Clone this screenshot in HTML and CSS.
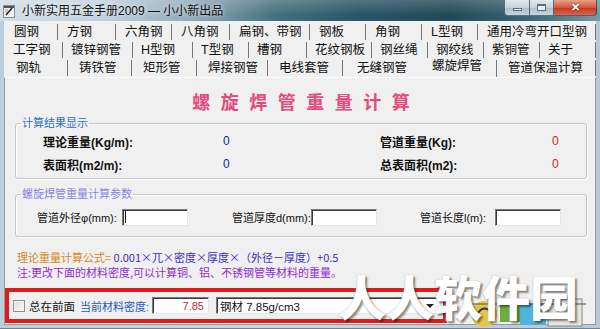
FILE: index.html
```html
<!DOCTYPE html>
<html lang="zh-CN">
<head>
    <meta charset="UTF-8">
    <meta name="viewport" content="width=device-width, initial-scale=1.0">
    <title>小新实用五金手册2009 — 小小新出品</title>
    <link rel="stylesheet" href="styles.css">
</head>
<body>
<div class="window">
    <div class="titlebar">
        <svg class="app-icon" width="13" height="14" viewBox="0 0 13 14">
            <rect x="0.5" y="1.5" width="11" height="12" fill="#f4f4f4" stroke="#8a8a8a"/>
            <rect x="1" y="2" width="10" height="2" fill="#555"/>
            <path d="M3 11 L9 4" stroke="#222" stroke-width="1.6"/>
            <path d="M2 6 h3 M2 8 h2" stroke="#999"/>
        </svg>
        <span class="title">小新实用五金手册2009 — 小小新出品</span>
        <div class="controls">
            <span class="ctl min"><i></i></span>
            <span class="ctl max"><i></i></span>
            <span class="ctl close">✕</span>
        </div>
    </div>

    <div class="client">
        <div class="tabs">
            <div class="tab-row row1">
                <span class="tab">圆钢</span>
                <span class="tab">方钢</span>
                <span class="tab">六角钢</span>
                <span class="tab">八角钢</span>
                <span class="tab">扁钢、带钢</span>
                <span class="tab">钢板</span>
                <span class="tab">角钢</span>
                <span class="tab">L型钢</span>
                <span class="tab">通用冷弯开口型钢</span>
            </div>
            <div class="tab-row row2">
                <span class="tab">工字钢</span>
                <span class="tab">镀锌钢管</span>
                <span class="tab">H型钢</span>
                <span class="tab">T型钢</span>
                <span class="tab">槽钢</span>
                <span class="tab">花纹钢板</span>
                <span class="tab">钢丝绳</span>
                <span class="tab">钢绞线</span>
                <span class="tab">紫铜管</span>
                <span class="tab">关于</span>
            </div>
            <div class="tab-row row3">
                <span class="tab">钢轨</span>
                <span class="tab">铸铁管</span>
                <span class="tab">矩形管</span>
                <span class="tab">焊接钢管</span>
                <span class="tab">电线套管</span>
                <span class="tab no-sep">无缝钢管</span>
                <span class="tab active">螺旋焊管</span>
                <span class="tab">管道保温计算</span>
            </div>
        </div>

        <div class="panel">
            <h1 class="heading">螺旋焊管重量计算</h1>

            <fieldset class="group result-group">
                <legend class="legend-blue">计算结果显示</legend>
                <div class="result-grid">
                    <span class="label-bold">理论重量(Kg/m):</span>
                    <span class="val blue">0</span>
                    <span class="label-bold">管道重量(Kg):</span>
                    <span class="val red">0</span>
                    <span class="label-bold">表面积(m2/m):</span>
                    <span class="val blue">0</span>
                    <span class="label-bold">总表面积(m2):</span>
                    <span class="val red">0</span>
                </div>
            </fieldset>

            <fieldset class="group param-group">
                <legend class="legend-purple">螺旋焊管重量计算参数</legend>
                <div class="param-grid">
                    <span class="label">管道外径φ(mm):</span>
                    <span class="box"><span class="caret"></span></span>
                    <span class="label">管道厚度d(mm):</span>
                    <span class="box"></span>
                    <span class="label">管道长度l(m):</span>
                    <span class="box"></span>
                </div>
            </fieldset>

            <div class="notes">
                <p><span class="orange">理论重量计算公式=</span> <span class="navy">0.001×兀×密度×厚度×（外径－厚度）+0.5</span></p>
                <p class="purple">注:更改下面的材料密度,可以计算铜、铝、不锈钢管等材料的重量。</p>
            </div>

            <div class="bottom-bar">
                <span class="checkbox"></span>
                <span class="check-label">总在前面</span>
                <span class="density-label">当前材料密度:</span>
                <span class="box density">7.85</span>
                <span class="box combo">钢材 7.85g/cm3<span class="arrow"></span></span>
            </div>
        </div>
    </div>

    <div class="watermark">
        <svg class="wm-logo" width="120" height="34" viewBox="0 0 120 34">
            <circle cx="18" cy="20" r="13" fill="#e4c64a"/>
            <path d="M10 22 q8 -14 16 -2" stroke="#333" stroke-width="2" fill="none"/>
            <rect x="34" y="4" width="22" height="24" fill="#6cae3a"/>
            <rect x="54" y="9" width="26" height="22" fill="#4fb3dd"/>
            <rect x="82" y="5" width="34" height="27" fill="#e9e6df" stroke="#888"/>
            <path d="M0 10 H120" stroke="#555" stroke-width="1"/>
        </svg>
        <span class="wm-text">人人软件园</span>
    </div>
</div>
</body>
</html>
```

FILE: styles.css
```css
* {
    box-sizing: border-box;
}
body {
    margin: 0;
    width: 600px;
    height: 329px;
    overflow: hidden;
    font-family: "Liberation Sans", "Noto Sans CJK SC", sans-serif;
    font-size: 12px;
    color: #111;
    background: #c5d4df;
}
.window {
    position: relative;
    width: 600px;
    height: 329px;
    display: flex;
    flex-direction: column;
    background: linear-gradient(90deg, #bccddb, #c9d7e2 50%, #b7c9d6);
    border-bottom: 1px solid #6d8597;
}

/* title bar */
.titlebar {
    height: 21px;
    display: flex;
    align-items: center;
    padding-left: 3px;
    background:
        linear-gradient(180deg, rgba(255,255,255,0.18), rgba(255,255,255,0) 70%),
        linear-gradient(90deg, #d3dfe8 0%, #c0cfdb 18%, #8aa6b5 33%, #46707f 46%, #2b5566 60%, #224958 75%, #3a6676 88%, #7299a7 100%);
}
.app-icon {
    flex: none;
}
.title {
    margin-left: 6px;
    font-size: 12px;
    line-height: 14px;
    color: #111;
    text-shadow: 0 0 5px rgba(255,255,255,0.9);
}
.controls {
    margin-left: auto;
    margin-right: 3px;
    align-self: flex-start;
    display: flex;
}
.ctl {
    height: 16px;
    display: flex;
    align-items: center;
    justify-content: center;
    border: 1px solid rgba(40,60,80,0.7);
    border-top: none;
}
.min, .max {
    width: 25px;
    background: linear-gradient(180deg, #e4eaef, #c6d1da 50%, #aebcc8 51%, #c9d4dc);
}
.min {
    border-bottom-left-radius: 4px;
    border-right: none;
}
.min i {
    width: 9px;
    height: 3px;
    margin-top: 4px;
    background: #fff;
    border: 1px solid #5d6f7d;
}
.max i {
    width: 9px;
    height: 7px;
    border: 1px solid #5d6f7d;
    border-top-width: 2px;
    background: #e9eef2;
}
.close {
    width: 43px;
    border-bottom-right-radius: 4px;
    border-left: none;
    color: #fff;
    font-size: 11px;
    font-weight: bold;
    background: linear-gradient(180deg, #e8a08c, #d4573d 50%, #c2371c 51%, #d9654a);
    text-shadow: 0 0 2px #5a1a0a;
}

/* client area */
.client {
    flex: 1;
    margin: 0 4px 3px;
    background: #f0f0f0;
    display: flex;
    flex-direction: column;
}
.tabs {
    padding: 2px 0 0 1px;
}
.tab-row {
    display: grid;
    height: 18px;
    align-items: center;
}
.row1 {
    grid-template-columns: 53px 58px 56px 58px 80px 56px 56px 56px 1fr;
}
.row2 {
    grid-template-columns: 58px 70px 60px 56px 58px 65px 56px 56px 56px 1fr;
}
.row3 {
    grid-template-columns: 63px 64px 65px 71px 75px 70px 84px 1fr;
}
.tab {
    height: 16px;
    line-height: 16px;
    font-size: 12.5px;
    white-space: nowrap;
    padding-left: 9px;
    border-right: 1px solid #767676;
    color: #111;
}
.row2 .tab {
    padding-left: 8px;
}
.row3 .tab {
    padding-left: 11px;
}
.row3 .tab.no-sep {
    padding-left: 14px;
    border-right-color: transparent;
}
.row3 .tab.active {
    height: 17px;
    align-self: end;
    padding-left: 19px;
    padding-bottom: 4px;
    line-height: 13px;
}

.panel {
    flex: 1;
    background: #f0f0f0;
    border: 1px solid #9a9a9a;
    border-top-color: #fcfcfc;
    padding: 0 8px 0 10px;
    display: flex;
    flex-direction: column;
}
.heading {
    margin: 14px 0 0;
    text-align: center;
    font-family: "Noto Sans CJK SC", sans-serif;
    font-size: 18px;
    line-height: 18px;
    font-weight: bold;
    letter-spacing: 10.5px;
    padding-left: 10.5px;
    color: #e54a7c;
}

/* group boxes */
.group {
    margin: 0;
    border: 1px solid #c2c6ca;
    border-radius: 3px;
    box-shadow: inset 1px 1px 0 #fff, 1px 1px 0 #fff;
    padding: 0 0 4px 5px;
}
.group legend {
    font-size: 11px;
    line-height: 14px;
    padding: 0 1px;
}
.legend-blue {
    color: #2d6cd2;
}
.legend-purple {
    color: #8a86e2;
}
.result-group {
    margin-top: 6px;
    padding-top: 1px;
}
.result-grid {
    margin-left: 22px;
    display: grid;
    grid-template-columns: 180px 157px 172px 1fr;
    grid-auto-rows: 20px;
    row-gap: 3px;
    align-items: center;
}
.label-bold {
    font-weight: bold;
    font-size: 12px;
    white-space: nowrap;
}
.val {
    font-size: 12px;
}
.blue {
    color: #1b1ba8;
}
.red {
    color: #d21d1d;
}

.param-group {
    margin-top: 8px;
    padding-top: 6px;
    padding-bottom: 9px;
}
.param-grid {
    margin-left: 16px;
    display: grid;
    grid-template-columns: 85px 110px 79px 109px 75px 67px;
    height: 20px;
    align-items: center;
}
.label {
    font-size: 11px;
    white-space: nowrap;
}
.box {
    display: flex;
    align-items: center;
    width: 66px;
    height: 17px;
    background: #fff;
    border-top: 1px solid #7a7a7a;
    border-left: 1px solid #7a7a7a;
    border-right: 1px solid #e6e6e6;
    border-bottom: 1px solid #e6e6e6;
    box-shadow: inset 1px 1px 0 #3a3a3a;
    white-space: nowrap;
}
.caret {
    width: 1px;
    height: 12px;
    margin-left: 2px;
    background: #000;
}

/* formula notes */
.notes {
    margin-top: 13px;
    padding-left: 2px;
    font-family: "Noto Sans CJK SC", sans-serif;
    font-size: 11px;
    line-height: 15px;
}
.notes p {
    margin: 0;
    white-space: nowrap;
}
.orange {
    color: #d9861f;
}
.navy {
    color: #3a2fc4;
}
.purple {
    color: #8e2bd8;
}

/* bottom bar with red outline */
.bottom-bar {
    margin: 8px 0 0 -10px;
    width: 442px;
    height: 35px;
    border: 4px solid #e01b1b;
    padding-left: 4px;
    display: flex;
    align-items: center;
    white-space: nowrap;
}
.checkbox {
    flex: none;
    width: 12px;
    height: 12px;
    border: 1px solid #8e8f8f;
    background: linear-gradient(135deg, #dcdcdc, #fbfbfb);
    box-shadow: inset 0 0 0 1px #f4f4f4;
}
.check-label {
    flex: none;
    width: 51px;
    margin-left: 4px;
    font-size: 11.5px;
}
.density-label {
    flex: none;
    width: 72px;
    font-size: 11px;
    color: #2456c9;
}
.box.density {
    flex: none;
    width: 57px;
    justify-content: flex-end;
    padding-right: 4px;
    color: #d21d1d;
    font-size: 11px;
}
.box.combo {
    flex: none;
    position: relative;
    width: 225px;
    margin-left: 7px;
    padding-left: 3px;
    font-size: 11.5px;
}
.arrow {
    position: absolute;
    right: 6px;
    top: 6px;
    border-left: 4px solid transparent;
    border-right: 4px solid transparent;
    border-top: 4px solid #222;
}

/* watermark overlay */
.watermark {
    position: absolute;
    left: 338px;
    top: 266px;
    width: 262px;
    height: 60px;
}
.wm-logo {
    position: absolute;
    left: 128px;
    top: 28px;
}
.wm-text {
    position: absolute;
    left: 0;
    top: 0;
    font-family: "Noto Sans CJK SC", sans-serif;
    font-size: 48px;
    line-height: 58px;
    font-weight: 900;
    color: #fff;
    white-space: nowrap;
    text-shadow: 2px 2px 2px rgba(0,0,0,0.45), 0 0 1px #999;
}
```
